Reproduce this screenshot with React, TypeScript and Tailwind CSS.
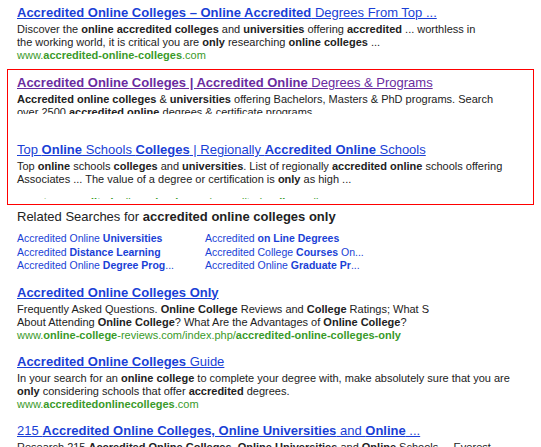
import React from "react";

const B = ({ children }: { children: React.ReactNode }) => <b className="font-bold">{children}</b>;

const Title = ({ children, visited }: { children: React.ReactNode; visited?: boolean }) => (
  <div className={`text-[13px] leading-[17px] underline whitespace-nowrap ${visited ? "text-[#6a2ca0]" : "text-[#1a3fd6]"}`}>{children}</div>
);
const Snip = ({ children }: { children: React.ReactNode }) => (
  <div className="text-[11px] leading-[13px] text-[#222]">{children}</div>
);
const Url = ({ children }: { children: React.ReactNode }) => (
  <div className="text-[11px] leading-[13px] text-[#3a9a2a] whitespace-nowrap">{children}</div>
);

export default function App() {
  return (
    <div className="w-[541px] h-[447px] overflow-hidden bg-white" style={{ fontFamily: '"Liberation Sans", Arial, sans-serif' }}>
      <div className="pl-[17px] pt-[4px] pr-[50px]">
        <Title><B>Accredited Online Colleges – Online Accredited</B> Degrees From Top ...</Title>
        <div className="mt-[2px]">
          <Snip>Discover the <B>online accredited colleges</B> and <B>universities</B> offering <B>accredited</B> ... worthless in the working world, it is critical you are <B>only</B> researching <B>online colleges</B> ...</Snip>
          <Url>www.<B>accredited-online-colleges</B>.com</Url>
        </div>
      </div>
      <div className="mx-[7px] mt-[7px] border border-[#ff0000] h-[136px] pl-[9px] pt-[4px]">
        <Title visited><B>Accredited Online Colleges | Accredited Online</B> Degrees &amp; Programs</Title>
        <div className="mt-[2px] h-[21px] overflow-hidden pr-[25px]">
          <Snip><B>Accredited online colleges</B> &amp; <B>universities</B> offering Bachelors, Masters &amp; PhD programs. Search over 2500 <B>accredited online</B> degrees &amp; certificate programs.</Snip>
        </div>
        <div className="mt-[27px]">
          <Title>Top <B>Online</B> Schools <B>Colleges</B> | Regionally <B>Accredited Online</B> Schools</Title>
        </div>
        <div className="mt-[2px] pr-[20px]">
          <Snip>Top <B>online</B> schools <B>colleges</B> and <B>universities</B>. List of regionally <B>accredited online</B> schools offering Associates ... The value of a degree or certification is <B>only</B> as high ...</Snip>
        </div>
        <div className="mt-[10px] h-[3px] overflow-hidden">
          <Url>www.<B>topa</B>ccre<B>dited</B>online<B>schools</B>.com/accredited-<B>online</B>-colleges</Url>
        </div>
      </div>
      <div className="pl-[17px] pt-[4px]">
        <div className="text-[13px] leading-[16px] text-[#222]">Related Searches for <B>accredited online colleges only</B></div>
        <div className="mt-[7px] grid grid-cols-[188px_1fr] text-[10.5px] leading-[13.5px] text-[#1a3fd6]">
          <div>Accredited Online <B>Universities</B></div>
          <div>Accredited <B>on Line Degrees</B></div>
          <div>Accredited <B>Distance Learning</B></div>
          <div>Accredited College <B>Courses</B> On...</div>
          <div>Accredited Online <B>Degree Prog</B>...</div>
          <div>Accredited Online <B>Graduate Pr</B>...</div>
        </div>
        <div className="mt-[11px]">
          <Title><B>Accredited Online Colleges Only</B></Title>
          <div className="mt-[2px]">
            <Snip>Frequently Asked Questions. <B>Online College</B> Reviews and <B>College</B> Ratings; What S<br />About Attending <B>Online College</B>? What Are the Advantages of <B>Online College</B>?</Snip>
            <Url>www.<B>online-college</B>-reviews.com/index.php/<B>accredited-online-colleges-only</B></Url>
          </div>
        </div>
        <div className="mt-[11px] pr-[30px]">
          <Title><B>Accredited Online Colleges</B> Guide</Title>
          <div className="mt-[2px]">
            <Snip>In your search for an <B>online college</B> to complete your degree with, make absolutely sure that you are <B>only</B> considering schools that offer <B>accredited</B> degrees.</Snip>
            <Url>www.<B>accreditedonlinecolleges</B>.com</Url>
          </div>
        </div>
        <div className="mt-[11px]">
          <Title>215 <B>Accredited Online Colleges, Online Universities</B> and <B>Online</B> ...</Title>
          <div className="mt-[2px]">
            <Snip>Research 215 <B>Accredited Online Colleges, Online Universities</B> and <B>Online</B> Schools ... Everest</Snip>
          </div>
        </div>
      </div>
    </div>
  );
}
